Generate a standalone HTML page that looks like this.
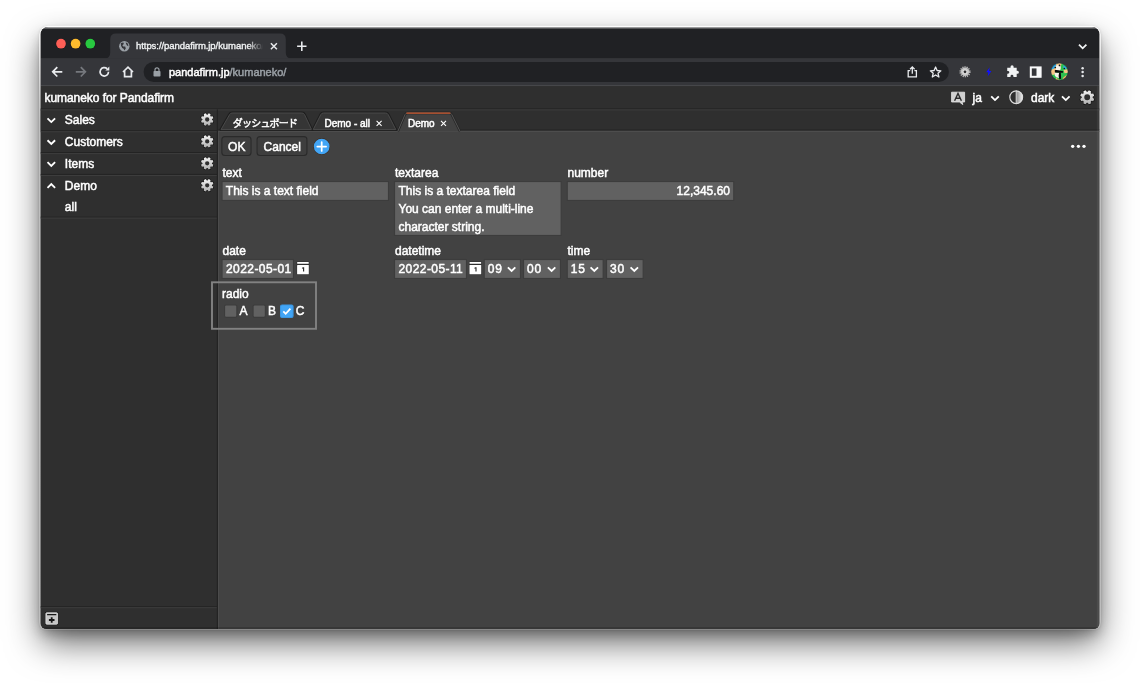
<!DOCTYPE html>
<html lang="ja">
<head>
<meta charset="utf-8">
<title>kumaneko for Pandafirm</title>
<style>
*{box-sizing:border-box;margin:0;padding:0}
html,body{width:1140px;height:683px;overflow:hidden;background:#fff}
body{font-family:"Liberation Sans","Noto Sans CJK JP",sans-serif;font-size:12px;color:#fff;position:relative;-webkit-text-stroke:.48px currentColor}
#shadow{position:absolute;left:41px;top:28px;width:1058px;height:600px;border-radius:7px 7px 6px 6px;
 box-shadow:0 15px 34px rgba(0,0,0,.58),0 6px 12px rgba(0,0,0,.25),0 0 3px 1px rgba(0,0,0,.25)}
#vec{position:absolute;left:0;top:0}
#txt{position:absolute;left:0;top:0;width:1140px;height:683px;will-change:transform}
.t{position:absolute;line-height:14px;white-space:nowrap}
.t10{font-size:10px;line-height:12px}
#ctabtxt{left:136px;top:40px;width:128px;height:12px;font-size:9.5px;letter-spacing:-.06px;line-height:12px;color:#f1f3f4;-webkit-text-stroke:.35px currentColor;overflow:hidden;
 -webkit-mask-image:linear-gradient(90deg,#000 112px,transparent 127px);mask-image:linear-gradient(90deg,#000 112px,transparent 127px)}
#url{left:169px;top:65px;font-size:11px;color:#fff}
#url span{color:#9aa0a6}
.ta{position:absolute;line-height:18px;white-space:nowrap}
</style>
</head>
<body>
<div id="shadow"></div>
<svg id="vec" width="1140" height="683" viewBox="0 0 1140 683">
<defs>
<clipPath id="wc"><path d="M48 27 H1092 A7.5 7.5 0 0 1 1099.5 34.5 V623 A6 6 0 0 1 1093.5 629 H46.5 A6 6 0 0 1 40.5 623 V34.5 A7.5 7.5 0 0 1 48 27 Z"/></clipPath>
<linearGradient id="hlg" x1="0" y1="0" x2="0" y2="1"><stop offset="0" stop-color="#fff" stop-opacity=".7"/><stop offset="1" stop-color="#fff" stop-opacity="0"/></linearGradient>
<linearGradient id="ringg" x1="0" y1="0" x2="0" y2="1"><stop offset="0" stop-color="#fff" stop-opacity=".95"/><stop offset=".03" stop-color="#fff" stop-opacity=".95"/><stop offset=".16" stop-color="#fff" stop-opacity=".46"/><stop offset=".985" stop-color="#fff" stop-opacity=".42"/><stop offset="1" stop-color="#fff" stop-opacity=".2"/></linearGradient>
<linearGradient id="gg" x1="0" y1="0" x2="0" y2="1"><stop offset="0" stop-color="#f4f4f4"/><stop offset="1" stop-color="#b0b0b0"/></linearGradient>
<linearGradient id="cg" x1="0" y1="0" x2="1" y2="0"><stop offset="0" stop-color="#8c8c8c"/><stop offset="1" stop-color="#f0f0f0"/></linearGradient>
<path id="gear" fill-rule="evenodd" d="M0.37 -4.74 L1.48 -6.17 L3.32 -5.41 L3.08 -3.61 L3.61 -3.08 L5.41 -3.32 L6.17 -1.48 L4.74 -0.37 L4.74 0.37 L6.17 1.48 L5.41 3.32 L3.61 3.08 L3.08 3.61 L3.32 5.41 L1.48 6.17 L0.37 4.74 L-0.37 4.74 L-1.48 6.17 L-3.32 5.41 L-3.08 3.61 L-3.61 3.08 L-5.41 3.32 L-6.17 1.48 L-4.74 0.37 L-4.74 -0.37 L-6.17 -1.48 L-5.41 -3.32 L-3.61 -3.08 L-3.08 -3.61 L-3.32 -5.41 L-1.48 -6.17 L-0.37 -4.74 Z M0 -2.15 A2.15 2.15 0 1 0 0 2.15 A2.15 2.15 0 1 0 0 -2.15 Z"/>
<path id="gear2" fill-rule="evenodd" d="M0.38 -4.84 L1.48 -6.17 L3.32 -5.41 L3.15 -3.69 L3.69 -3.15 L5.41 -3.32 L6.17 -1.48 L4.84 -0.38 L4.84 0.38 L6.17 1.48 L5.41 3.32 L3.69 3.15 L3.15 3.69 L3.32 5.41 L1.48 6.17 L0.38 4.84 L-0.38 4.84 L-1.48 6.17 L-3.32 5.41 L-3.15 3.69 L-3.69 3.15 L-5.41 3.32 L-6.17 1.48 L-4.84 0.38 L-4.84 -0.38 L-6.17 -1.48 L-5.41 -3.32 L-3.69 -3.15 L-3.15 -3.69 L-3.32 -5.41 L-1.48 -6.17 L-0.38 -4.84 Z M0 -2.6 A2.6 2.6 0 1 0 0 2.6 A2.6 2.6 0 1 0 0 -2.6 Z"/>
<path id="chv" d="M-3.8 -1.85 L0 1.85 L3.8 -1.85" stroke="#fff" stroke-width="1.85" fill="none"/>
<path id="chu" d="M-3.8 1.85 L0 -1.85 L3.8 1.85" stroke="#fff" stroke-width="1.85" fill="none"/>
<g id="cal"><rect x="-.5" y="-.5" width="12.7" height="13.3" rx="1" fill="#222" opacity=".55"/><rect x="0" y="0" width="11.7" height="1.7" rx=".4" fill="#fff"/><rect x="0" y="3" width="11.7" height="9.3" rx=".5" fill="#fff"/><path d="M5 6.4 L6 5.7 H6.5 V9.6" stroke="#2a2a2a" stroke-width="1.15" fill="none"/></g>
<clipPath id="av"><circle cx="0" cy="0" r="8.6"/></clipPath>
</defs>
<path d="M48 25.8 H1092 A8.8 8.8 0 0 1 1100.8 34.6 V622.8 A7.2 7.2 0 0 1 1093.6 630 H46.4 A7.2 7.2 0 0 1 39.2 622.8 V34.6 A8.8 8.8 0 0 1 48 25.8 Z" fill="url(#ringg)"/>
<g clip-path="url(#wc)">
<rect x="40.5" y="27" width="1059" height="602" fill="#424242" />
<rect x="40.5" y="27" width="1059" height="31.5" fill="#202124" />
<rect x="40.5" y="27" width="1059" height="2.3" fill="url(#hlg)" />
<path d="M104.4 58.5 Q110.2 58.5 110.2 52.7 V39.4 Q110.2 33.6 116 33.6 H280 Q285.8 33.6 285.8 39.4 V52.7 Q285.8 58.5 291.6 58.5 Z" fill="#35363a" />
<rect x="40.5" y="58.5" width="1059" height="26.9" fill="#35363a" />
<rect x="40.5" y="85.3" width="1059" height="0.8" fill="#4b4c50" />
<rect x="143.6" y="61.9" width="805.3" height="20" rx="10" fill="#202124"/>
<circle cx="61" cy="43.7" r="5.3" fill="#111" opacity=".55"/><circle cx="61" cy="43.7" r="4.85" fill="#fe5f57"/>
<circle cx="75.6" cy="43.7" r="5.3" fill="#111" opacity=".55"/><circle cx="75.6" cy="43.7" r="4.85" fill="#febc2e"/>
<circle cx="90.3" cy="43.7" r="5.3" fill="#111" opacity=".55"/><circle cx="90.3" cy="43.7" r="4.85" fill="#28c840"/>
<g transform="translate(124.3 46.3)"><circle r="5.2" fill="#9aa0a6"/><path d="M-3.5 -3.3 L-.9 -3.9 L-.5 -2.3 L-1.9 -1.1 L-1.1 .1 L.9 .3 L1.5 2.1 L.1 4.1 L-.7 2.5 L-2.1 1.7 L-3.3 -.5 Z M1.5 -4.1 L3.7 -2.5 L4.1 -.1 L2.7 -.9 L1.7 -2.5 Z" fill="#35363a"/></g>
<g transform="translate(273.9 46.3)"><path d="M-3 -3 L3 3 M3 -3 L-3 3" stroke="#e8eaed" stroke-width="1.5"/></g>
<g transform="translate(301.8 46.3)"><path d="M0 -4.7 V4.7 M-4.7 0 H4.7" stroke="#e8eaed" stroke-width="1.6"/></g>
<g transform="translate(1082.7 46.4)"><path d="M-3.7 -1.8 L0 1.9 L3.7 -1.8" stroke="#f1f3f4" stroke-width="1.8" fill="none"/></g>
<g transform="translate(57.3 71.8)"><path d="M5 0 H-4.2 M0 -4.7 L-4.6 0 L0 4.7" stroke="#e8eaed" stroke-width="1.7" fill="none"/></g>
<g transform="translate(80.8 71.8)"><path d="M-5 0 H4.2 M0 -4.7 L4.6 0 L0 4.7" stroke="#75787d" stroke-width="1.7" fill="none"/></g>
<g transform="translate(104.5 71.8)"><path d="M4 0 A4.2 4.2 0 1 1 2.6 -3.1" stroke="#e8eaed" stroke-width="1.7" fill="none"/><path d="M4.8 -5.3 V-1.3 H.8 Z" fill="#e8eaed"/></g>
<g transform="translate(128 71.8)"><path d="M-5 .2 L0 -4.6 L5 .2 M-3.4 -.8 V4.8 H3.4 V-.8" stroke="#e8eaed" stroke-width="1.7" fill="none"/></g>
<g transform="translate(157 72)"><rect x="-3.5" y="-1" width="7" height="5.6" rx=".8" fill="#9aa0a6"/><path d="M-2 -.6 V-2.2 A2 2 0 0 1 2 -2.2 V-.6" stroke="#9aa0a6" stroke-width="1.2" fill="none"/></g>
<g transform="translate(912.3 72)"><path d="M-2.1 -1.4 H-4.1 V4.8 H4.1 V-1.4 H2.1 M0 1.8 V-4.8 M-2.3 -2.8 L0 -5.1 L2.3 -2.8" stroke="#e8eaed" stroke-width="1.3" fill="none"/></g>
<g transform="translate(935.6 72)"><path d="M0 -5 L1.5 -1.5 L5.3 -1.2 L2.4 1.3 L3.3 5 L0 3 L-3.3 5 L-2.4 1.3 L-5.3 -1.2 L-1.5 -1.5 Z" stroke="#e8eaed" stroke-width="1.3" fill="none" stroke-linejoin="round"/></g>
<g transform="translate(965 71.8)"><circle r="4.2" fill="#c4c4c4"/><circle r="4.8" fill="none" stroke="#c4c4c4" stroke-width="1.5" stroke-dasharray="1.15 1.0"/><circle r="2.6" fill="#dadada"/><circle r="1.35" fill="#2a2a2c"/></g>
<g transform="translate(988.8 71.8)"><path transform="scale(.84)" d="M1.1 -5.5 L-3.1 .5 H-.5 L-1.3 5.5 L3.1 -.9 H.3 Z" fill="#1010ff"/></g>
<g transform="translate(1012.3 71.6)"><path transform="scale(1.1)" d="M-1.6 -4.4 A1.4 1.4 0 0 1 1.2 -4.4 V-3.6 H4 V-.8 H4.6 A1.4 1.4 0 0 1 4.6 2 H4 V5 H1 V4.2 A1.3 1.3 0 0 0 -1.6 4.2 V5 H-4.6 V2 H-4 A1.3 1.3 0 0 0 -4 -.6 H-4.6 V-3.6 H-1.6 Z" fill="#f1f3f4"/></g>
<g transform="translate(1035.6 72)"><rect x="-4.8" y="-4.6" width="9.8" height="9.4" fill="none" stroke="#f8f9fa" stroke-width="2"/><rect x=".9" y="-4.5" width="4.6" height="9" fill="#f8f9fa"/></g>
<g transform="translate(1059.5 71.7)"><g clip-path="url(#av)"><rect x="-9" y="-9" width="18" height="18" fill="#2cc04e"/><path d="M-9 -6 L-3 -9 L-2.5 -6 L-5 -3 L-9 -1.5 Z" fill="#2fa8e6"/><path d="M3.6 -6.4 L7.4 -4.2 L6.4 -2.4 L4 -3.8 Z" fill="#2fa8e6"/><path d="M-9 -1.8 L-5.2 -3.2 L-3.4 -6 L-3.2 -9 H2.4 L1.6 -6.2 L-1 -1 L-3.8 1 L-6 3.2 L-9 2.6 Z" fill="#f6c583"/><path d="M4 -1.6 L9 -2.6 V1 L5 1.6 Z" fill="#f6c583"/><path d="M-3.4 6 L1.2 9 H-4.4 Z" fill="#f0c070"/><path d="M3.6 6 L7.2 3 L6.2 6.6 L3 8.4 Z" fill="#f3b262"/><path d="M-6.5 6.5 L-4 8.8 L-7 8 Z" fill="#2277c8"/><ellipse cx="-1.3" cy="-3.7" rx="2.6" ry="3.1" fill="#f7f3ea"/><circle cx="-4.2" cy="-4.2" r=".85" fill="#111"/><circle cx="0" cy="-6.3" r=".85" fill="#111"/><circle cx="4.8" cy="-3.2" r=".75" fill="#151515"/><path d="M-4.8 1 L-.4 .8 L-.4 6.2 L-3.4 5.6 L-5 3.2 Z" fill="#f7f3ea"/><path d="M-4.7 -1.7 Q-1 -2 1 -1 L3.7 -.4 L3.4 1.1 L-1 1.1 L-4.6 .7 Z" fill="#0c0c0c"/><path d="M-.4 1 H1.3 L1.7 7 L-.2 7.5 L-.9 4 Z" fill="#0c0c0c"/></g><circle r="8.6" fill="none" stroke="#2a2035" stroke-width=".7" opacity=".8"/></g>
<g transform="translate(1082.6 72.1)"><circle cy="-3.9" r="1.25" fill="#e8eaed"/><circle r="1.25" fill="#e8eaed"/><circle cy="3.9" r="1.25" fill="#e8eaed"/></g>
<rect x="40.5" y="86.1" width="1059" height="43.9" fill="#2f2f2f" />
<rect x="40.5" y="109.4" width="177" height="519.6" fill="#2f2f2f" />
<rect x="40.5" y="108.4" width="1059" height="1" fill="#232323" />
<rect x="40.5" y="109.4" width="1059" height="1" fill="#3e3e3e" />
<rect x="40.5" y="130.25" width="176.5" height="1" fill="#232323" />
<rect x="40.5" y="131.25" width="176.5" height="1" fill="#3e3e3e" />
<rect x="40.5" y="152.1" width="176.5" height="1" fill="#232323" />
<rect x="40.5" y="153.1" width="176.5" height="1" fill="#3e3e3e" />
<rect x="40.5" y="173.95" width="176.5" height="1" fill="#232323" />
<rect x="40.5" y="174.95" width="176.5" height="1" fill="#3e3e3e" />
<rect x="40.5" y="216.6" width="176.5" height="1" fill="#232323" />
<rect x="40.5" y="217.6" width="176.5" height="1" fill="#3e3e3e" />
<rect x="40.5" y="606.2" width="176.5" height="1" fill="#232323" />
<rect x="40.5" y="607.2" width="176.5" height="1" fill="#3e3e3e" />
<rect x="218" y="130.6" width="881.5" height="498.4" fill="#424242" />
<rect x="218" y="129.3" width="881.5" height="1.4" fill="#272727" />
<rect x="218" y="130.9" width="881.5" height="1" fill="#4f4f4f" />
<rect x="218" y="131" width="0.9" height="498" fill="#4d4d4d" />
<rect x="216.8" y="109.4" width="1.2" height="519.6" fill="#232323" />
<rect x="1096.8" y="86.1" width="2.7" height="542.9" fill="#fff" opacity=".055"/>
<rect x="40.5" y="627" width="1059" height="2" fill="#000" opacity=".16"/>
<path d="M221 129.6 L229.6 114.6 Q230.4 113 232.20000000000002 113 H301.9 Q303.7 113 304.5 114.6 L311.6 129.6 Z" fill="#373737" stroke="#1e1e1e" stroke-width="3" stroke-linejoin="round"/>
<path d="M221 129.6 L229.6 114.6 Q230.4 113 232.20000000000002 113 H301.9 Q303.7 113 304.5 114.6 L311.6 129.6 Z" fill="#353535" stroke="#4a4a4a" stroke-width="1" />
<path d="M313.2 129.6 L320.8 114.6 Q321.6 113 323.40000000000003 113 H385.59999999999997 Q387.4 113 388.2 114.6 L395.8 129.6 Z" fill="#373737" stroke="#1e1e1e" stroke-width="3" stroke-linejoin="round"/>
<path d="M313.2 129.6 L320.8 114.6 Q321.6 113 323.40000000000003 113 H385.59999999999997 Q387.4 113 388.2 114.6 L395.8 129.6 Z" fill="#353535" stroke="#4a4a4a" stroke-width="1" />
<path d="M397.9 131.2 L405.0 114.6 Q405.8 113 407.6 113 H449.2 Q451 113 451.8 114.6 L460 131.2 Z" fill="#424242" />
<path d="M397.9 131.2 L405.0 114.6 Q405.8 113 407.6 113 H449.2 Q451 113 451.8 114.6 L460 131.2" fill="none" stroke="#262626" stroke-width="2.4" />
<path d="M397.9 131.2 L405.0 114.6 Q405.8 113 407.6 113 H449.2 Q451 113 451.8 114.6 L460 131.2" fill="none" stroke="#555" stroke-width="1" />
<path d="M406.40000000000003 113.1 H450.4" fill="none" stroke="#c8562c" stroke-width="1.3" />
<g transform="translate(379.1 123.4)"><path d="M-2.5 -2.5 L2.5 2.5 M2.5 -2.5 L-2.5 2.5" stroke="#fff" stroke-width="1.1"/></g>
<g transform="translate(443.5 123.4)"><path d="M-2.5 -2.5 L2.5 2.5 M2.5 -2.5 L-2.5 2.5" stroke="#fff" stroke-width="1.1"/></g>
<g transform="translate(951 91.6)"><path d="M.6 .6 H13.6 V10.4 H11 L11.8 13 L8.4 10.4 H.6 Z" fill="#cfcfcf" stroke="#e8e8e8" stroke-width=".8"/><path d="M3.6 9.2 L7 1.9 L10.4 9.2 M4.9 6.6 H9.1" stroke="#2a2a2a" stroke-width="1.4" fill="none"/></g>
<g transform="translate(995 98.2)"><use href="#chv"/></g>
<g transform="translate(1016.2 97.2)"><circle r="7.3" fill="#111" opacity=".5"/><circle r="6.4" fill="#2f2f2f"/><path d="M0 -6.5 A6.5 6.5 0 0 1 0 6.5 Z" fill="url(#cg)"/><circle r="6.4" fill="none" stroke="#dcdcdc" stroke-width="1.2"/><path d="M0 -6.5 V6.5" stroke="#dcdcdc" stroke-width="1"/></g>
<g transform="translate(1065.8 98.2)"><use href="#chv"/></g>
<g transform="translate(1087.2 97.3) scale(1.13)"><use href="#gear2" fill="#000" opacity=".55" transform="scale(1.13)"/><use href="#gear2" fill="url(#gg)"/></g>
<g transform="translate(51.3 120.2)"><use href="#chv"/></g>
<g transform="translate(207.2 119.5) scale(1)"><use href="#gear" fill="#000" opacity=".55" transform="scale(1.13)"/><use href="#gear" fill="url(#gg)"/></g>
<g transform="translate(51.3 142.13)"><use href="#chv"/></g>
<g transform="translate(207.2 141.43) scale(1)"><use href="#gear" fill="#000" opacity=".55" transform="scale(1.13)"/><use href="#gear" fill="url(#gg)"/></g>
<g transform="translate(51.3 164.06)"><use href="#chv"/></g>
<g transform="translate(207.2 163.36) scale(1)"><use href="#gear" fill="#000" opacity=".55" transform="scale(1.13)"/><use href="#gear" fill="url(#gg)"/></g>
<g transform="translate(51.3 185.99)"><use href="#chu"/></g>
<g transform="translate(207.2 185.29) scale(1)"><use href="#gear" fill="#000" opacity=".55" transform="scale(1.13)"/><use href="#gear" fill="url(#gg)"/></g>
<g transform="translate(45.5 612.4)"><rect x="-.6" y="-.6" width="13.6" height="13.4" rx="1.4" fill="#111" opacity=".6"/><rect x=".35" y=".35" width="11.7" height="11.5" rx=".9" fill="#c6c6c6" stroke="#ececec" stroke-width=".7"/><rect x="1.6" y="1.6" width="9.2" height="1.25" fill="#161616"/><path d="M6.2 4.8 V10.4 M3.4 7.6 H9" stroke="#161616" stroke-width="1.8"/></g>
<rect x="221.85" y="136.65" width="29.2" height="18.8" rx="3" fill="#3e3e3e" stroke="#2a2a2a" stroke-width="1.1"/>
<rect x="257.05" y="136.65" width="49.9" height="18.8" rx="3" fill="#3e3e3e" stroke="#2a2a2a" stroke-width="1.1"/>
<g transform="translate(321.7 146.5)"><circle r="8.4" fill="#3a2a1e" opacity=".75"/><circle r="7.85" fill="#42a5f5"/><path d="M0 -4.4 V4.4 M-4.4 0 H4.4" stroke="#fff" stroke-width="1.75" stroke-linecap="round"/></g>
<g transform="translate(1078.4 146.3)"><circle cx="-5.7" r="1.65" fill="#fff"/><circle r="1.65" fill="#fff"/><circle cx="5.6" r="1.65" fill="#fff"/></g>
<rect x="222.05" y="181.55" width="166.4" height="18.9" rx="0" fill="#616161" stroke="#3c3c3c" stroke-width="1.1"/>
<rect x="394.55" y="181.55" width="166.6" height="53.9" rx="0" fill="#616161" stroke="#3c3c3c" stroke-width="1.1"/>
<rect x="567.25" y="181.55" width="166.5" height="18.9" rx="0" fill="#616161" stroke="#3c3c3c" stroke-width="1.1"/>
<rect x="222.05" y="259.55" width="71.4" height="18.9" rx="0" fill="#616161" stroke="#3c3c3c" stroke-width="1.1"/>
<g transform="translate(297.1 262)"><use href="#cal"/></g>
<rect x="394.55" y="259.55" width="71.9" height="18.9" rx="0" fill="#616161" stroke="#3c3c3c" stroke-width="1.1"/>
<g transform="translate(469.5 262)"><use href="#cal"/></g>
<rect x="484.25" y="259.55" width="36.2" height="18.9" rx="0" fill="#616161" stroke="#3c3c3c" stroke-width="1.1"/>
<g transform="translate(511.6 269.2)"><use href="#chv" transform="scale(.98)"/></g>
<rect x="523.55" y="259.55" width="36.9" height="18.9" rx="0" fill="#616161" stroke="#3c3c3c" stroke-width="1.1"/>
<g transform="translate(551.6 269.2)"><use href="#chv" transform="scale(.98)"/></g>
<rect x="567.25" y="259.55" width="35.9" height="18.9" rx="0" fill="#616161" stroke="#3c3c3c" stroke-width="1.1"/>
<g transform="translate(594.3 269.2)"><use href="#chv" transform="scale(.98)"/></g>
<rect x="606.55" y="259.55" width="36.6" height="18.9" rx="0" fill="#616161" stroke="#3c3c3c" stroke-width="1.1"/>
<g transform="translate(634.3 269.2)"><use href="#chv" transform="scale(.98)"/></g>
<rect x="212" y="282.3" width="104" height="46.5" fill="none" stroke="#828282" stroke-width="1.9"/>
<rect x="224.55" y="305.05" width="12.3" height="12.3" rx="1.5" fill="#616161" stroke="#3c3c3c" stroke-width="1.1"/>
<rect x="253.05" y="305.05" width="12.3" height="12.3" rx="1.5" fill="#616161" stroke="#3c3c3c" stroke-width="1.1"/>
<rect x="280.55" y="305.05" width="12.5" height="12.5" rx="1.5" fill="#42a5f5" stroke="#3b97e3" stroke-width="1.1"/>
<g transform="translate(286.8 311.3)"><path d="M-3.5 .1 L-1.1 2.5 L3.6 -2.6" stroke="#fff" stroke-width="1.8" fill="none"/></g>
</g>
</svg>
<div id="txt">
<div class="t" id="ctabtxt">https://pandafirm.jp/kumaneko/</div>
<div class="t" id="url">pandafirm.jp<span>/kumaneko/</span></div>
<div class="t t10" style="left:232.8px;top:117.5px;letter-spacing:-.8px">ダッシュボード</div>
<div class="t t10" style="left:324.5px;top:117.5px;">Demo - all</div>
<div class="t t10" style="left:408px;top:117.5px;">Demo</div>
<div class="t " style="left:44.5px;top:91px;letter-spacing:-.06px">kumaneko for Pandafirm</div>
<div class="t " style="left:972.6px;top:91px;">ja</div>
<div class="t " style="left:1031px;top:91px;">dark</div>
<div class="t " style="left:64.8px;top:112.8px;">Sales</div>
<div class="t " style="left:64.8px;top:134.73px;">Customers</div>
<div class="t " style="left:64.8px;top:156.66px;">Items</div>
<div class="t " style="left:64.8px;top:178.59px;">Demo</div>
<div class="t " style="left:64.8px;top:199.8px;">all</div>
<div class="t " style="left:222.5px;top:139.5px;width:28.5px;text-align:center">OK</div>
<div class="t " style="left:257.6px;top:139.5px;width:49.4px;text-align:center">Cancel</div>
<div class="t " style="left:222.5px;top:166.3px;">text</div>
<div class="t " style="left:395px;top:166.3px;">textarea</div>
<div class="t " style="left:567.5px;top:166.3px;">number</div>
<div class="t " style="left:225.8px;top:184.4px;">This is a text field</div>
<div class="ta" style="left:398.5px;top:182.1px">This is a textarea field</div>
<div class="ta" style="left:398.5px;top:200.1px">You can enter a multi-line</div>
<div class="ta" style="left:398.5px;top:218.1px">character string.</div>
<div class="t " style="left:567.7px;top:184.1px;width:162.3px;text-align:right">12,345.60</div>
<div class="t " style="left:222.5px;top:243.5px;">date</div>
<div class="t " style="left:395px;top:243.5px;">datetime</div>
<div class="t " style="left:567.5px;top:243.5px;">time</div>
<div class="t " style="left:226px;top:262px;letter-spacing:.42px">2022-05-01</div>
<div class="t " style="left:398.5px;top:262px;letter-spacing:.42px">2022-05-11</div>
<div class="t " style="left:487.7px;top:262.3px;letter-spacing:.9px">09</div>
<div class="t " style="left:527px;top:262.3px;letter-spacing:.9px">00</div>
<div class="t " style="left:570.7px;top:262.3px;letter-spacing:.9px">15</div>
<div class="t " style="left:610px;top:262.3px;letter-spacing:.9px">30</div>
<div class="t " style="left:222px;top:286.8px;">radio</div>
<div class="t " style="left:239.5px;top:304px;">A</div>
<div class="t " style="left:268px;top:304px;">B</div>
<div class="t " style="left:295.7px;top:304px;">C</div>
</div>
</body>
</html>
